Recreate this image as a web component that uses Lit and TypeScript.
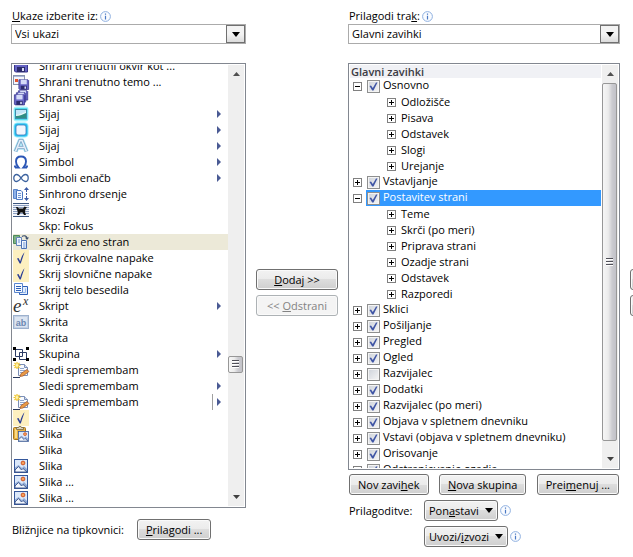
import { LitElement, html, svg, css, nothing, TemplateResult } from "lit";
import { customElement, property, state } from "lit/decorators.js";
import { classMap } from "lit/directives/class-map.js";

type Flyout = "menu" | "split";
interface Command {
  text: string;
  icon?: string;
  flyout?: Flyout;
}
interface TabNode {
  text: string;
  checked: boolean;
  groups?: string[];
}

const COMMANDS: Command[] = [
  { text: "Shrani trenutni okvir kot ...", icon: "save" },
  { text: "Shrani trenutno temo ...", icon: "saveTheme" },
  { text: "Shrani vse", icon: "saveAll" },
  { text: "Sijaj", icon: "glowPicture", flyout: "menu" },
  { text: "Sijaj", icon: "glowShape", flyout: "menu" },
  { text: "Sijaj", icon: "glowText", flyout: "menu" },
  { text: "Simbol", icon: "omega", flyout: "menu" },
  { text: "Simboli enačb", icon: "infinity", flyout: "menu" },
  { text: "Sinhrono drsenje", icon: "syncScroll" },
  { text: "Skozi", icon: "wrapThrough" },
  { text: "Skp: Fokus" },
  { text: "Skrči za eno stran", icon: "shrink" },
  { text: "Skrij črkovalne napake", icon: "check" },
  { text: "Skrij slovnične napake", icon: "check" },
  { text: "Skrij telo besedila", icon: "hideBody" },
  { text: "Skript", icon: "script", flyout: "menu" },
  { text: "Skrita", icon: "hidden" },
  { text: "Skrita" },
  { text: "Skupina", icon: "group", flyout: "menu" },
  { text: "Sledi spremembam", icon: "track" },
  { text: "Sledi spremembam", flyout: "menu" },
  { text: "Sledi spremembam", icon: "track", flyout: "split" },
  { text: "Sličice", icon: "check" },
  { text: "Slika", icon: "pastePicture" },
  { text: "Slika" },
  { text: "Slika", icon: "picture" },
  { text: "Slika ...", icon: "picture" },
  { text: "Slika ...", icon: "picture" },
];

const TABS: TabNode[] = [
  { text: "Osnovno", checked: true, groups: ["Odložišče", "Pisava", "Odstavek", "Slogi", "Urejanje"] },
  { text: "Vstavljanje", checked: true },
  {
    text: "Postavitev strani",
    checked: true,
    groups: ["Teme", "Skrči (po meri)", "Priprava strani", "Ozadje strani", "Odstavek", "Razporedi"],
  },
  { text: "Sklici", checked: true },
  { text: "Pošiljanje", checked: true },
  { text: "Pregled", checked: true },
  { text: "Ogled", checked: true },
  { text: "Razvijalec", checked: false },
  { text: "Dodatki", checked: true },
  { text: "Razvijalec (po meri)", checked: true },
  { text: "Objava v spletnem dnevniku", checked: true },
  { text: "Vstavi (objava v spletnem dnevniku)", checked: true },
  { text: "Orisovanje", checked: true },
  { text: "Odstranjevanje ozadja", checked: true },
];

const disk = (x: number, y: number, s: number) => svg`
  <g transform="translate(${x} ${y}) scale(${s})">
    <path d="M.5 1h12l1 1v12h-12l-1-1z" fill="#6664c4" stroke="#37358c" stroke-width="1"/>
    <rect x="3" y="1" width="8" height="6" fill="#d5dbf8"/>
    <rect x="3" y="9" width="8" height="5" fill="#2b2b6c"/>
    <rect x="8" y="10" width="2" height="3" fill="#d9dcf5"/>
  </g>`;

const picture = (x: number, y: number, s: number) => svg`
  <g transform="translate(${x} ${y}) scale(${s})">
    <rect x="0.5" y="0.5" width="13" height="13" fill="#dbe8fa" stroke="#35579b"/>
    <path d="M1 8.5 4.500 6 8 9l2-2 3 3v3H1z" fill="#8fa9d6"/>
    <path d="M1 11 4.500 7.500 7.500 11 9 9.500 13 13H1z" fill="#f4f8ff" stroke="#3a5488" stroke-width="0.9"/>
    <circle cx="9" cy="4" r="1.900" fill="#f6a15a" stroke="#cc4a1b" stroke-width="0.9"/>
  </g>`;

const ICONS: Record<string, TemplateResult> = {
  save: svg`${disk(1, 0, 1)}`,
  saveTheme: svg`
    <rect x="0.5" y="1.500" width="11" height="9" fill="#f4f6fc" stroke="#8893ad"/>
    <path d="M1 2.500h10" stroke="#a9b7dc" stroke-width="1"/>
    <rect x="2" y="5" width="3" height="3" fill="#e2542d"/>
    ${disk(5.5, 5, 0.75)}`,
  saveAll: svg`${disk(5, 0, 0.72)}${disk(3, 2, 0.72)}${disk(1, 4, 0.78)}`,
  glowPicture: svg`
    <rect x="0.5" y="0.5" width="15" height="15" rx="3" fill="#a7f2fb"/>
    <rect x="1.500" y="2" width="13" height="12" rx="1" fill="#50dcee"/>
    <rect x="2.500" y="3.500" width="11" height="9" fill="#c3e6f8" stroke="#3d8dab"/>
    <path d="M3 9c4 0 6-2 10-3v6H3z" fill="#2f8f83"/>
    <path d="M3 8.500c4 0 6-2 10-3v1.500C10 8 7 10 3 10z" fill="#e6f7f8"/>`,
  glowShape: svg`
    <rect x="0.5" y="0.5" width="15" height="15" rx="4" fill="#8fe9fb"/>
    <rect x="1.500" y="1.500" width="13" height="13" rx="3" fill="#25bdf0"/>
    <rect x="3" y="3" width="10" height="10" rx="2" fill="#f3f6fd" stroke="#3f7fbd" stroke-width="0.8"/>`,
  glowText: svg`
    <path d="M2.500 13.500 7 2.500h2L13.500 13.500M5 9.500h6" fill="none" stroke="#a5e4f4" stroke-width="4.600" stroke-linejoin="round"/>
    <path d="M2.500 13.500 7 2.500h2L13.500 13.500M5 9.500h6" fill="none" stroke="#7ea3c6" stroke-width="3.200"/>
    <path d="M2.500 13.500 7 2.500h2L13.500 13.500M5 9.500h6" fill="none" stroke="#e6f0fa" stroke-width="1.600"/>`,
  omega: svg`
    <path d="M2 13.500h3.500C3.500 11.500 3 9.500 3 7.500 3 4.500 5 2.500 8 2.500s5 2 5 5c0 2-.5 4-2.500 6H14M2 11.500v2M14 11.500v2" fill="none" stroke="#2b56b6" stroke-width="1.900"/>`,
  infinity: svg`
    <path d="M8 8C6.500 5.800 5.200 4.500 3.700 4.500 2 4.500.8 6 .8 8s1.200 3.500 2.900 3.500C5.200 11.500 6.500 10.200 8 8s2.800-3.500 4.300-3.500c1.700 0 2.900 1.500 2.900 3.500s-1.200 3.500-2.900 3.500C10.800 11.500 9.500 10.200 8 8z" fill="none" stroke="#3d639f" stroke-width="1.300"/>`,
  syncScroll: svg`
    <path d="M.5 3.500h4v9h-4z" fill="#8fb2e8" stroke="#5c86cb"/>
    <path d="M3.500 4.500H8l1.500 1.500v7.500h-6z" fill="#f4f8ff" stroke="#4d78c0"/>
    <path d="M5 7.500h3M5 9.500h3M5 11.500h3" stroke="#6f95d3"/>
    <path d="M13.500 4v9" stroke="#3a5aa6" stroke-dasharray="2 1"/>
    <path d="M11 4 13.500 1 16 4zM11 12 13.500 15 16 12z" fill="#3a5aa6"/>`,
  wrapThrough: svg`
    <rect x="0" y="1" width="16" height="14" fill="#f2f5fb"/>
    <path d="M0 1.500h16M0 14.500h16" stroke="#3c567f"/>
    <path d="M0 3.500h16M0 5.500h16M0 7.500h16M0 9.500h16M0 11.500h16" stroke="#8c9fc0"/>
    <path d="M3 5h1.500L6 6.500h4L11.500 4.500 14 5.500l-1.500 1.500-.5 3 1 3h-2L9.500 10.500H7.500l-1.500 2.500H4l.8-3z" fill="#111"/>`,
  shrink: svg`
    <path d="M.5 1.500h6v8h-6z" fill="#7db082" stroke="#4d8a5c"/>
    <path d="M3.500 3.500h5v8h-5z" fill="#eef4ff" stroke="#6585bb"/>
    <path d="M8.500 6.500h5v8h-5z" fill="#f4f8ff" stroke="#4a70b4"/>
    <path d="M5 6h2M5 8h2M10 9h2.500M10 11h2.500M10 13h2.500" stroke="#6b93d4"/>
    <path d="M9 2.500c2-1.500 4.500-.5 5 1.500" fill="none" stroke="#3c4f6e" stroke-width="1.200"/>
    <path d="M12 3.500h4l-2 2.500z" fill="#3c4f6e"/>`,
  check: svg`
    <rect width="16" height="16" fill="#fdf0c0"/>
    <path d="M4 8.500 5.500 8l1.700 3.200C8.200 7.500 9.500 4.500 11.500 2.200 10.300 5.800 9 9.500 7.800 13.500H6.700z" fill="#2c3f96"/>`,
  hideBody: svg`
    <path d="M6.500 4.500h8v8h-8z" fill="#e4eefc" stroke="#2e5fb6"/>
    <path d="M1.500 1.500h8v9h-8z" fill="#f7faff" stroke="#5b86cd"/>
    <path d="M3 4.500h5M3 6.500h5M3 8.500h5" stroke="#2e5fb6"/>
    <path d="M12.500 6.500v4H10" fill="none" stroke="#8fb4ea"/>`,
  hidden: svg`
    <rect x="0.5" y="1.500" width="15" height="13" fill="#c3d0e4" stroke="#9db1cd"/>
    <rect x="2" y="3" width="12" height="10" fill="#dce5f1"/>
    <text x="8" y="12" class="ab">ab</text>`,
  script: svg`<text x="0" y="14" class="ee">e</text><text x="10" y="7" class="ex">x</text>`,
  group: svg`
    <path d="M2.500 3.500h7v7h-7zM6.500 6.500h7v7h-7z" fill="none" stroke="#2c3c66"/>
    <path d="M0 1h3v3H0zM13 1h3v3h-3zM0 12h3v3H0zM13 12h3v3h-3z" fill="#000"/>`,
  track: svg`
    <path d="M5.500 2.500h6l3 3v8h-9z" fill="#f6f9ff" stroke="#7c8fb5"/>
    <path d="M11.500 2.500v3h3" fill="#cfdcf2" stroke="#7c8fb5"/>
    <path d="M7 6.500h4M7 8.500h5M7 10.500h4" stroke="#90a6cc"/>
    <path d="M0 15.500h7" stroke="#27375c"/>
    <path d="M7 14.500l1-3 6-4 2 2-6 4.500z" fill="#e99a45" stroke="#a2552a" stroke-width="0.7"/>
    <path d="M4 0v7M.5 3.500h7M1.500 1l5 5M6.500 1l-5 5" stroke="#f0c52c" stroke-width="1.200"/>
    <circle cx="4" cy="3.500" r="1.400" fill="#fff5ae"/>`,
  pastePicture: svg`
    <rect x="0.5" y="1.500" width="12" height="12" rx="1" fill="#e6b040" stroke="#a3741b"/>
    <path d="M2 3h2v9H2z" fill="#f8d987"/>
    <path d="M3.500 3.500v-2h2L6 .5h2l.5 1h2v2z" fill="#d7d2c0" stroke="#7a6a3d" stroke-width="0.8"/>
    ${picture(5, 5, 0.78)}`,
  picture: svg`${picture(1, 1, 1)}`,
};

const infoIcon = html`<svg class="info" viewBox="0 0 11 11" width="11" height="11" aria-hidden="true">
  <circle cx="5.500" cy="5.500" r="4.900" fill="#fafcff" stroke="#8fb0e0" stroke-width="1" />
  <path d="M5.500 2.500v1.200M5.500 4.700v3.800" stroke="#4a78c4" stroke-width="1.200" />
</svg>`;

const downArrow = html`<svg viewBox="0 0 8 5" width="8" height="5" aria-hidden="true">
  <path d="M0 0h8L4 5z" fill="#000" />
</svg>`;

const shared = css`
  :host {
    font-family: "Open Sans", "Noto Sans", sans-serif;
    font-size: 11px;
    line-height: 16px;
    color: #000;
  }
  * {
    box-sizing: border-box;
  }
  svg {
    display: block;
    flex: none;
  }
`;

@customElement("combo-box")
class ComboBox extends LitElement {
  @property() value = "";
  @property() label = "";

  static styles = [
    shared,
    css`
      :host {
        display: grid;
        height: 20px;
      }
      select {
        grid-area: 1 / 1;
        appearance: none;
        width: 100%;
        height: 20px;
        margin: 0;
        padding: 0 24px 0 3px;
        border: 1px solid #ababab;
        border-radius: 0;
        background: #fff;
        font: inherit;
        color: #000;
      }
      .arrow {
        grid-area: 1 / 1;
        justify-self: end;
        align-self: center;
        display: grid;
        place-items: center;
        width: 19px;
        height: 18px;
        margin-right: 1px;
        border: 1px solid #707070;
        background: linear-gradient(#f3f3f3 50%, #dcdcdc);
        pointer-events: none;
      }
    `,
  ];

  render() {
    return html`<select aria-label=${this.label}><option>${this.value}</option></select>
      <span class="arrow">${downArrow}</span>`;
  }
}

@customElement("scroll-rail")
class ScrollRail extends LitElement {
  @property({ type: Number }) before = 0;
  @property({ type: Number }) size = 0;
  @property({ type: Number }) after = 0;

  static styles = [
    shared,
    css`
      :host {
        display: flex;
        flex-direction: column;
        width: 16px;
        background: #efefef;
      }
      .end {
        display: grid;
        place-items: center;
        height: 18px;
        flex: none;
      }
      .thumb {
        display: grid;
        place-items: center;
        flex-basis: 0;
        min-height: 16px;
        margin-right: 1px;
        border: 1px solid #979797;
        border-radius: 2px;
        background: linear-gradient(90deg, #f6f6f6, #ececec 40%, #cbcbd0 70%, #c2c2c8);
      }
    `,
  ];

  render() {
    return html`
      <div class="end">
        <svg viewBox="0 0 7 4" width="7" height="4"><path d="M0 4 3.500 0 7 4z" fill="#505050" /></svg>
      </div>
      <div style="flex: ${this.before} 0 0"></div>
      <div class="thumb" style="flex-grow: ${this.size}">
        <svg viewBox="0 0 7 8" width="7" height="8">
          <path d="M0 .5h7M0 3.500h7M0 6.500h7" stroke="#505058" />
          <path d="M0 1.500h7M0 4.500h7M0 7.500h7" stroke="#fff" />
        </svg>
      </div>
      <div style="flex: ${this.after} 0 0"></div>
      <div class="end">
        <svg viewBox="0 0 7 4" width="7" height="4"><path d="M0 0h7L3.500 4z" fill="#404040" /></svg>
      </div>
    `;
  }
}

@customElement("command-list")
class CommandList extends LitElement {
  @state() private selected = 11;

  static styles = [
    shared,
    css`
      :host {
        display: flex;
        padding: 1px;
        border: 1px solid #828790;
        background: #fff;
      }
      .view {
        flex: 1;
        min-width: 0;
        overflow: hidden;
      }
      ul {
        list-style: none;
        margin: -7px 0 0;
        padding: 0;
      }
      li {
        display: flex;
        align-items: center;
        height: 16px;
        white-space: nowrap;
      }
      li.selected {
        background: #ece9d8;
      }
      .icon {
        margin-right: 10px;
        overflow: visible;
      }
      .text {
        flex: 1;
      }
      .fly {
        display: flex;
        align-items: center;
        height: 16px;
        padding: 0 7px 0 4px;
      }
      .fly.split {
        border-left: 1px solid #a0a0a0;
      }
      .ab {
        font: bold 9px "Liberation Sans", sans-serif;
        fill: #6c87b0;
        text-anchor: middle;
      }
      .ee {
        font: italic 19px "Liberation Serif", serif;
        fill: #333;
      }
      .ex {
        font: italic 12px "Liberation Serif", serif;
        fill: #333;
      }
    `,
  ];

  render() {
    return html`
      <div class="view">
        <ul role="listbox" aria-label="Ukazi">
          ${COMMANDS.map(
            (c, i) => html`<li
              role="option"
              aria-selected=${i === this.selected ? "true" : "false"}
              class=${classMap({ selected: i === this.selected })}
              @click=${() => (this.selected = i)}
            >
              <svg class="icon" viewBox="0 0 16 16" width="16" height="16">${c.icon ? ICONS[c.icon] : nothing}</svg>
              <span class="text">${c.text}</span>
              ${c.flyout
                ? html`<span class=${classMap({ fly: true, split: c.flyout === "split" })}
                    ><svg viewBox="0 0 4 8" width="4" height="8"><path d="M0 0 4 4 0 8z" fill="#4a5a94" /></svg
                  ></span>`
                : nothing}
            </li>`
          )}
        </ul>
      </div>
      <scroll-rail before="274" size="15" after="116"></scroll-rail>
    `;
  }
}

@customElement("tab-tree")
class TabTree extends LitElement {
  @state() private selected = "Postavitev strani";

  static styles = [
    shared,
    css`
      :host {
        display: flex;
        padding: 1px;
        border: 1px solid #828790;
        background: #fff;
      }
      .view {
        flex: 1;
        min-width: 0;
        overflow: hidden;
      }
      h2 {
        height: 13px;
        margin: 0 1px 0 0;
        padding-left: 1px;
        background: #f0f1f5;
        font-size: 11px;
        font-weight: 600;
        line-height: 14px;
        color: #3c3c44;
      }
      ul {
        list-style: none;
        margin: 0;
        padding: 0;
      }
      .tabs {
        margin-bottom: -10px;
      }
      .row {
        display: flex;
        align-items: center;
        height: 16px;
        padding-left: 3px;
        white-space: nowrap;
      }
      .groups .row {
        gap: 5px;
        padding-left: 37px;
      }
      .toggle {
        display: grid;
        place-items: center;
        flex: none;
        width: 9px;
        height: 9px;
        margin: 0;
        padding: 0;
        border: 1px solid #808080;
        background: #fff;
      }
      label {
        display: flex;
        align-items: center;
        flex: 1;
        gap: 3px;
        height: 16px;
        margin: 0 1px 0 4px;
        padding-left: 1px;
      }
      .name {
        padding-bottom: 2px;
      }
      .selected label {
        background: #3399ff;
        color: #fff;
      }
      .box {
        display: grid;
        place-items: center;
      }
      .box > * {
        grid-area: 1 / 1;
      }
      input {
        appearance: none;
        width: 13px;
        height: 13px;
        margin: 0;
        border: 1px solid #8e8f8f;
        background: linear-gradient(135deg, #cdd2da, #f6f6f6);
        box-shadow: inset 0 0 0 1px #f4f4f4;
      }
      .box svg {
        visibility: hidden;
        pointer-events: none;
      }
      input:checked + svg {
        visibility: visible;
      }
    `,
  ];

  private toggle(open: boolean, name: string) {
    return html`<button class="toggle" type="button" aria-label=${name} aria-expanded=${open ? "true" : "false"}>
      <svg viewBox="0 0 7 7" width="7" height="7">
        <path d=${open ? "M1 3.500h5" : "M1 3.500h5M3.500 1v5"} stroke="#000" />
      </svg>
    </button>`;
  }

  render() {
    return html`
      <div class="view">
        <h2>Glavni zavihki</h2>
        <ul class="tabs">
          ${TABS.map(
            (t) => html`<li>
              <div
                class=${classMap({ row: true, selected: t.text === this.selected })}
                @click=${() => (this.selected = t.text)}
              >
                ${this.toggle(!!t.groups, t.text)}
                <label
                  ><span class="box"
                    ><input type="checkbox" .checked=${t.checked} /><svg viewBox="0 0 9 9" width="9" height="9">
                      <path d="M0.500 4 2 3.500 3.800 6 7 0.500H8.500L4.500 8.500H3.200z" fill="#3f55a5" /></svg></span
                  ><span class="name">${t.text}</span></label
                >
              </div>
              ${t.groups
                ? html`<ul class="groups">
                    ${t.groups.map((g) => html`<li class="row">${this.toggle(false, g)}<span>${g}</span></li>`)}
                  </ul>`
                : nothing}
            </li>`
          )}
        </ul>
      </div>
      <scroll-rail before="0" size="358" after="9"></scroll-rail>
    `;
  }
}

@customElement("app-root")
class AppRoot extends LitElement {
  static styles = [
    shared,
    css`
      :host {
        display: grid;
        grid-template-columns: minmax(0, 235fr) 82px minmax(0, 272fr) 3px;
        column-gap: 10px;
        align-items: start;
        padding: 8px 0 10px 11px;
        background: #fff;
        overflow: hidden;
      }
      .column {
        display: flex;
        flex-direction: column;
      }
      .caption {
        display: flex;
        align-items: center;
        gap: 2px;
        height: 16px;
        padding-left: 1px;
        white-space: nowrap;
      }
      combo-box {
        margin-bottom: 19px;
      }
      .moves {
        display: flex;
        flex-direction: column;
        gap: 5px;
        padding-top: 261px;
      }
      .edge button {
        width: 24px;
      }
      button {
        display: flex;
        align-items: center;
        justify-content: center;
        gap: 6px;
        height: 21px;
        margin: 0;
        padding: 0 8px;
        border: 1px solid #707070;
        border-radius: 3px;
        background: linear-gradient(#f2f2f2, #ebebeb 50%, #dddddd 50%, #cfcfcf);
        box-shadow: inset 0 0 0 1px #fafafa;
        font: inherit;
        color: #000;
        white-space: nowrap;
      }
      button:disabled {
        border-color: #adb2b5;
        background: #f4f4f4;
        color: #838383;
      }
      .shortcuts {
        display: flex;
        align-items: center;
        gap: 13px;
        margin-top: 11px;
        padding-left: 1px;
      }
      .actions {
        display: flex;
        justify-content: space-between;
        margin: 4px 1px 5px;
      }
      .custom {
        display: grid;
        grid-template-columns: 75px 1fr;
        row-gap: 5px;
        align-items: center;
        padding-left: 1px;
      }
      .menu {
        grid-column: 2;
        display: flex;
        align-items: center;
        gap: 2px;
      }
      .menu button {
        padding: 0 4px;
      }
    `,
  ];

  render() {
    return html`
      <section class="column">
        <div class="caption"><span><u>U</u>kaze izberite iz:</span>${infoIcon}</div>
        <combo-box value="Vsi ukazi" label="Ukaze izberite iz"></combo-box>
        <command-list></command-list>
        <div class="shortcuts">
          <span>Bližnjice na tipkovnici:</span>
          <button type="button"><span><u>P</u>rilagodi ...</span></button>
        </div>
      </section>
      <div class="moves">
        <button type="button"><span><u>D</u>odaj &gt;&gt;</span></button>
        <button type="button" disabled><span>&lt;&lt; <u>O</u>dstrani</span></button>
      </div>
      <section class="column">
        <div class="caption"><span>Prilagodi tra<u>k</u>:</span>${infoIcon}</div>
        <combo-box value="Glavni zavihki" label="Prilagodi trak"></combo-box>
        <tab-tree></tab-tree>
        <div class="actions">
          <button type="button"><span>Nov zavi<u>h</u>ek</span></button>
          <button type="button"><span><u>N</u>ova skupina</span></button>
          <button type="button"><span>Prei<u>m</u>enuj ...</span></button>
        </div>
        <div class="custom">
          <span>Prilagoditve:</span>
          <div class="menu">
            <button type="button"><span>Pon<u>a</u>stavi</span>${downArrow}</button>
            ${infoIcon}
          </div>
          <div class="menu">
            <button type="button"><span>Uvozi/<u>i</u>zvozi</span>${downArrow}</button>
            ${infoIcon}
          </div>
        </div>
      </section>
      <div class="moves edge">
        <button type="button" aria-label="Premakni navzgor"></button>
        <button type="button" aria-label="Premakni navzdol"></button>
      </div>
    `;
  }
}
